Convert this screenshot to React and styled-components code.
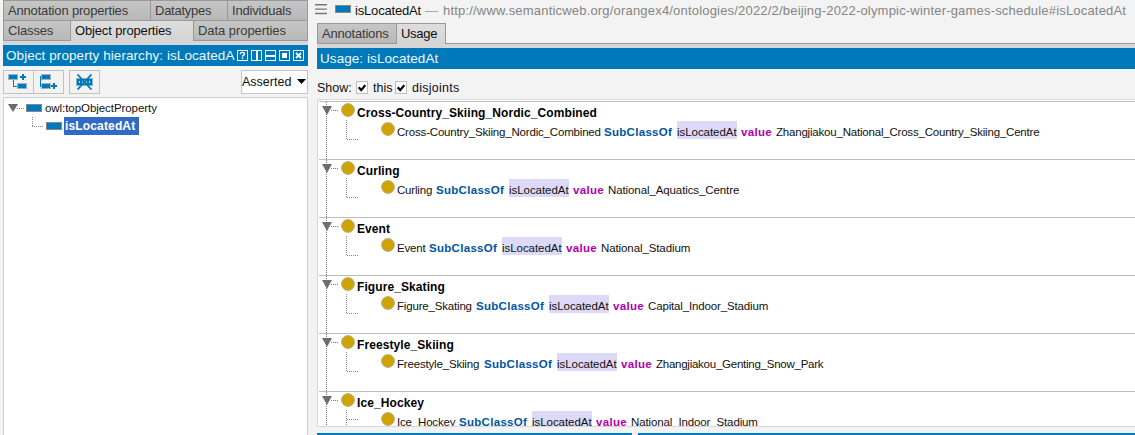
import React from 'react';
import styled, { createGlobalStyle, css } from 'styled-components';

const BLUE = '#0079ba';

const GlobalStyle = createGlobalStyle`
  * { box-sizing: border-box; }
  html, body { margin: 0; padding: 0; }
  body {
    background: #f3f3f3;
    color: #111;
    font-family: "Liberation Sans", Arial, sans-serif;
    font-size: 13px;
    overflow: hidden;
  }
`;

const Window = styled.div`
  display: flex;
  gap: 9px;
  width: 1135px;
  height: 435px;
  padding-left: 3px;
  overflow: hidden;
  white-space: nowrap;
`;

const Sidebar = styled.aside`
  display: flex;
  flex-direction: column;
  width: 305px;
  flex: none;
`;

const Main = styled.main`
  display: flex;
  flex-direction: column;
  flex: 1;
  min-width: 0;
`;

const TabRow = styled.div`
  display: flex;
  height: ${p => p.$height}px;
  flex: none;
`;

const Tab = styled.div`
  width: ${p => p.$width}px;
  padding-left: 4px;
  line-height: ${p => p.$line || 19}px;
  letter-spacing: ${p => p.$spacing || 0}px;
  color: #3a3a3a;
  background: linear-gradient(#c6c6c6, #b8b8b8);
  border: 1px solid #999;
  border-width: 1px 0 ${p => (p.$last ? 1 : 0)}px 1px;
  ${p => p.$end && css`border-right-width: 1px;`}
  ${p => p.$selected && css`
    color: #111;
    background: linear-gradient(#dedede, #d4d4d4);
    border-bottom: 0;
  `}
`;

const TabRest = styled.div`
  flex: 1;
  border-bottom: 1px solid #999;
`;

const Band = styled.div`
  height: ${p => p.$height}px;
  flex: none;
  background: #d6d6d6;
`;

const TitleBar = styled.div`
  display: flex;
  align-items: center;
  height: 21px;
  flex: none;
  padding: 0 4px 0 3px;
  background: ${BLUE};
  color: #eef8ff;
  font-size: 13.5px;
  letter-spacing: 0.07px;
`;

const TitleText = styled.span`
  flex: 1;
  line-height: 21px;
`;

const Toolbar = styled.div`
  display: flex;
  height: 31px;
  flex: none;
  padding: 4px 0 3px;
`;

const ToolButton = styled.div`
  display: flex;
  align-items: center;
  justify-content: center;
  width: 31px;
  height: 24px;
  margin-right: ${p => p.$gap}px;
  border: 1px solid #c2c2c2;
  background: #f3f3f3;
`;

const Select = styled.div`
  display: flex;
  align-items: center;
  justify-content: space-between;
  width: 67px;
  height: 24px;
  margin-left: auto;
  padding: 0 1px 1px 0;
  border: 1px solid #c6c6c6;
  background: #fff;
  font-size: 12.5px;
`;

const Tree = styled.div`
  flex: 1;
  padding-top: 1px;
  border: 1px solid #d0d0d0;
  border-bottom: 0;
  background: #fff;
  font-size: 11.5px;
`;

const TreeRow = styled.div`
  display: flex;
  height: 18px;
  line-height: 18px;
  padding-left: ${p => p.$indent}px;
  letter-spacing: -0.06px;
`;

const SelectedNode = styled.span`
  height: 18px;
  width: 75px;
  margin-left: 2px;
  padding-left: 1px;
  background: #316ac5;
  color: #fff;
  font-size: 12px;
  font-weight: bold;
  letter-spacing: 0.15px;
`;

const NodeName = styled.span`
  margin-left: 3px;
`;

const Header = styled.header`
  display: flex;
  align-items: flex-start;
  height: 23px;
  flex: none;
  margin-left: -2px;
  line-height: 22px;
`;

const HeaderIcon = styled.div`
  display: flex;
  width: ${p => p.$width}px;
  flex: none;
  padding-top: ${p => p.$top}px;
`;

const EntityName = styled.span`
  width: 70px;
  flex: none;
  letter-spacing: -0.18px;
`;

const EntityIri = styled.span`
  color: #858585;
  letter-spacing: 0.19px;
`;

const Dash = styled.span`
  width: 18px;
  flex: none;
  color: #aaa;
`;

const ShowBar = styled.div`
  display: flex;
  align-items: center;
  height: 30px;
  flex: none;
  padding-top: 7px;
  font-size: 12.5px;
`;

const ShowLabel = styled.span`
  width: ${p => p.$width}px;
  letter-spacing: ${p => p.$spacing || 0}px;
`;

const CheckBox = styled.span`
  display: flex;
  align-items: center;
  justify-content: center;
  width: 12px;
  height: 13px;
  margin-right: 5px;
  border: 1px solid #bebebe;
  background: #fff;
`;

const UsageList = styled.div`
  height: 328px;
  flex: none;
  padding: 1px 0 0 1px;
  border: 1px solid #d8d8d8;
  border-right: 0;
  background: #fff;
  overflow: hidden;
`;

const Entry = styled.section`
  display: flex;
  height: 58px;
  border-top: 1px solid #bdbdbd;
`;

const EntryBody = styled.div`
  display: flex;
  flex-direction: column;
`;

const EntryTitle = styled.div`
  height: 19px;
  padding: 2px 0 0 1px;
  color: #000;
  font-size: 12px;
  font-weight: bold;
  line-height: 18px;
  letter-spacing: 0.09px;
`;

const Axiom = styled.div`
  display: flex;
  height: 18px;
  padding-left: 41px;
  font-size: 11.5px;
  line-height: 23px;
`;

const Subject = styled.span`
  width: ${p => p.$width}px;
  letter-spacing: -0.18px;
`;

const Keyword = styled.span`
  width: ${p => p.$width}px;
  color: ${p => p.$color};
  font-size: 11.5px;
  font-weight: bold;
  letter-spacing: 0.3px;
`;

const Property = styled.span`
  width: 60px;
  height: 18px;
  margin-right: 4px;
  background: #dcdaf8;
  letter-spacing: -0.05px;
`;

const Value = styled.span`
  letter-spacing: ${p => p.$spacing}px;
`;

const Footer = styled.div`
  display: flex;
  gap: 6px;
  margin-top: auto;
  height: 2px;
`;

const FooterBar = styled.div`
  height: 2px;
  background: ${BLUE};
  ${p => (p.$width ? `width: ${p.$width}px;` : 'flex: 1;')}
`;

const PropertyIcon = () => (
  <svg width="16" height="9" viewBox="0 0 16 9" shapeRendering="crispEdges">
    <rect x=".5" y=".5" width="15" height="7" fill={BLUE} stroke="#888" />
  </svg>
);

const ViewButtons = () => (
  <svg width="67" height="11" viewBox="0 0 67 11" fill="none" stroke="#fff" shapeRendering="crispEdges">
    <rect x=".5" y=".5" width="10" height="10" />
    <path d="M3.300 4.200C3.300 1.800 7.500 1.800 7.500 4C7.500 5.200 5.500 5.200 5.500 6.700M5.500 7.600v1.500" strokeWidth="1.400" shapeRendering="auto" />
    <rect x="14.5" y=".5" width="10" height="10" />
    <path d="M19.5 1v9" strokeWidth="2" />
    <rect x="28.5" y=".5" width="10" height="10" />
    <path d="M29 5.5h9" strokeWidth="2" />
    <rect x="42.5" y=".5" width="10" height="10" />
    <rect x="45" y="3" width="5" height="5" fill="#fff" stroke="none" />
    <rect x="56.5" y=".5" width="10" height="10" />
    <path d="M59 3l5 5M64 3l-5 5" strokeWidth="1.8" shapeRendering="auto" />
  </svg>
);

const AddChildIcon = () => (
  <svg width="21" height="16" viewBox="0 0 21 16" shapeRendering="crispEdges">
    <path d="M5.500 5v7.500H9" fill="none" stroke={BLUE} />
    <rect x="0" y="0" width="10" height="6" fill="#9db4bf" />
    <rect x="1" y="1" width="8" height="4" fill={BLUE} />
    <rect x="9" y="9" width="10" height="6" fill="#9db4bf" />
    <rect x="10" y="10" width="8" height="4" fill={BLUE} />
    <path d="M12 3h6M15 0v6" stroke={BLUE} strokeWidth="2" />
  </svg>
);

const AddSiblingIcon = () => (
  <svg width="21" height="16" viewBox="0 0 21 16" shapeRendering="crispEdges">
    <path d="M4 2.500H2.500v10H4" fill="none" stroke={BLUE} />
    <rect x="3" y="0" width="10" height="6" fill="#9db4bf" />
    <rect x="4" y="1" width="8" height="4" fill={BLUE} />
    <rect x="3" y="9" width="10" height="6" fill="#9db4bf" />
    <rect x="4" y="10" width="8" height="4" fill={BLUE} />
    <path d="M13 12h6M16 9v6" stroke={BLUE} strokeWidth="2" />
  </svg>
);

const DeleteIcon = () => (
  <svg width="17" height="16" viewBox="0 0 17 16" fill="none" stroke={BLUE}>
    <rect x=".5" y="4.500" width="16" height="7" fill={BLUE} stroke="#8fb0c0" />
    <rect x="6" y="6" width="5" height="4" fill="#8fc0dd" stroke="none" />
    <path d="M3 8h1M13 8h1" stroke="#cfe3ee" strokeWidth="2" />
    <path d="M1.500 .5l14 15M15.500 .5l-14 15" strokeWidth="1.800" />
  </svg>
);

const Arrow = () => (
  <svg width="9" height="5" viewBox="0 0 9 5"><path d="M0 0h9L4.500 5z" fill="#000" /></svg>
);

const Check = () => (
  <svg width="8" height="8" viewBox="0 0 8 8"><path d="M.7 3.300l2.500 2.800L7.300 1.200" fill="none" stroke="#000" strokeWidth="2.200" /></svg>
);

const MenuIcon = () => (
  <svg width="12" height="11" viewBox="0 0 12 11">
    <path d="M0 .7h12M0 5.100h12M0 9.500h12" stroke="#777" strokeWidth="1.400" />
  </svg>
);

const RootBranch = () => (
  <svg width="22" height="18" viewBox="0 0 22 18">
    <path d="M0 5h10L5 13z" fill="#6b6b6b" />
    <path d="M9 9.500h8" stroke="#888" strokeDasharray="1 1" />
  </svg>
);

const ChildBranch = () => (
  <svg width="12" height="18" viewBox="0 0 12 18">
    <path d="M.5 0v9.500M0 9.500h12" fill="none" stroke="#888" strokeDasharray="1 1" />
  </svg>
);

const TreeIcon = styled.span`
  display: flex;
  padding-top: 5px;
  margin-left: ${p => p.$gap}px;
`;

const EntryBranch = ({ open }) => (
  <svg width="37" height="57" viewBox="0 0 37 57" overflow="visible">
    <path d="M7.500 0v58M12 8.500h7" stroke="#777" strokeDasharray="1 1" />
    <path d="M3 4h10L8 13z" fill="#6e6e6e" />
    <path d={open ? 'M27.500 18v39M28 27.500h11' : 'M27.500 18v19.500M28 37.500h12'} fill="none" stroke="#888" strokeDasharray="1 1" />
    <circle cx="29" cy="8" r="6.500" fill="#cfa300" stroke="#b4b09c" strokeWidth=".9" />
    <circle cx="69" cy="27" r="6.500" fill="#cfa300" stroke="#b4b09c" strokeWidth=".9" />
  </svg>
);

const entries = [
  { name: 'Cross-Country_Skiing_Nordic_Combined', width: 207, value: 'Zhangjiakou_National_Cross_Country_Skiing_Centre', spacing: -0.2 },
  { name: 'Curling', width: 39, value: 'National_Aquatics_Centre', spacing: -0.1 },
  { name: 'Event', width: 32, value: 'National_Stadium', spacing: -0.1 },
  { name: 'Figure_Skating', width: 79, value: 'Capital_Indoor_Stadium', spacing: -0.15 },
  { name: 'Freestyle_Skiing', width: 87, value: 'Zhangjiakou_Genting_Snow_Park', spacing: -0.25 },
  { name: 'Ice_Hockey', width: 62, value: 'National_Indoor_Stadium', spacing: -0.13, open: true },
];

export default function App() {
  return (
    <>
      <GlobalStyle />
      <Window>
        <Sidebar>
          <TabRow $height={20}>
            <Tab $width={147} $spacing={-0.17}>Annotation properties</Tab>
            <Tab $width={77} $spacing={-0.25}>Datatypes</Tab>
            <Tab $width={81} $spacing={-0.2} $end>Individuals</Tab>
          </TabRow>
          <TabRow $height={21}>
            <Tab $width={67} $spacing={-0.15} $last>Classes</Tab>
            <Tab $width={123} $spacing={-0.15} $selected>Object properties</Tab>
            <Tab $width={115} $spacing={-0.06} $last $end>Data properties</Tab>
          </TabRow>
          <Band $height={4} />
          <TitleBar>
            <TitleText>Object property hierarchy: isLocatedA</TitleText>
            <ViewButtons />
          </TitleBar>
          <Toolbar>
            <ToolButton $gap={-1}><AddChildIcon /></ToolButton>
            <ToolButton $gap={5}><AddSiblingIcon /></ToolButton>
            <ToolButton $gap={0}><DeleteIcon /></ToolButton>
            <Select>Asserted<Arrow /></Select>
          </Toolbar>
          <Tree>
            <TreeRow $indent={4}>
              <RootBranch />
              <TreeIcon $gap={-4}><PropertyIcon /></TreeIcon>
              <NodeName>owl:topObjectProperty</NodeName>
            </TreeRow>
            <TreeRow $indent={28}>
              <ChildBranch />
              <TreeIcon $gap={2}><PropertyIcon /></TreeIcon>
              <SelectedNode>isLocatedAt</SelectedNode>
            </TreeRow>
          </Tree>
        </Sidebar>
        <Main>
          <Header>
            <HeaderIcon $width={20} $top={4}><MenuIcon /></HeaderIcon>
            <HeaderIcon $width={20} $top={5}><PropertyIcon /></HeaderIcon>
            <EntityName>isLocatedAt</EntityName>
            <Dash>—</Dash>
            <EntityIri>http://www.semanticweb.org/orangex4/ontologies/2022/2/beijing-2022-olympic-winter-games-schedule#isLocatedAt</EntityIri>
          </Header>
          <TabRow $height={21}>
            <Tab $width={79} $line={20} $spacing={-0.2} $last>Annotations</Tab>
            <Tab $width={50} $line={20} $spacing={-0.3} $selected $end>Usage</Tab>
            <TabRest />
          </TabRow>
          <Band $height={4} />
          <TitleBar><TitleText>Usage: isLocatedAt</TitleText></TitleBar>
          <ShowBar>
            <ShowLabel $width={39}>Show:</ShowLabel>
            <CheckBox><Check /></CheckBox>
            <ShowLabel $width={22}>this</ShowLabel>
            <CheckBox><Check /></CheckBox>
            <ShowLabel $width={60} $spacing={0.25}>disjoints</ShowLabel>
          </ShowBar>
          <UsageList>
            {entries.map(e => (
              <Entry key={e.name}>
                <EntryBranch open={e.open} />
                <EntryBody>
                  <EntryTitle>{e.name}</EntryTitle>
                  <Axiom>
                    <Subject $width={e.width}>{e.name}</Subject>
                    <Keyword $width={73} $color="#0055a4">SubClassOf</Keyword>
                    <Property>isLocatedAt</Property>
                    <Keyword $width={35} $color="#b000b0">value</Keyword>
                    <Value $spacing={e.spacing}>{e.value}</Value>
                  </Axiom>
                </EntryBody>
              </Entry>
            ))}
          </UsageList>
          <Footer>
            <FooterBar $width={315} />
            <FooterBar />
          </Footer>
        </Main>
      </Window>
    </>
  );
}
